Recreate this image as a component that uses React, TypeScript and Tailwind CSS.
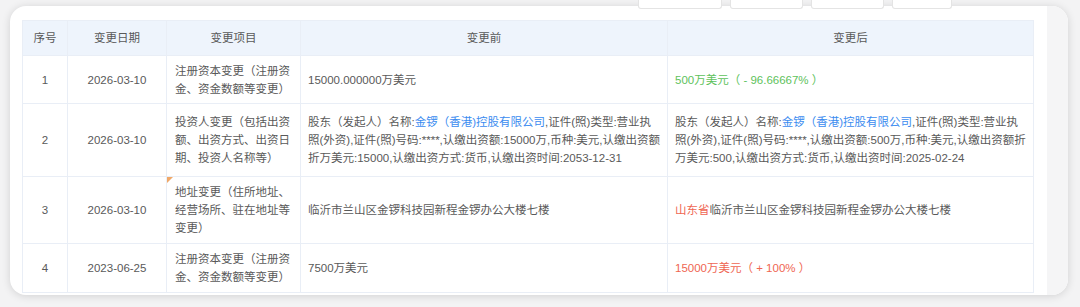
import React from "react";

const cell = "border border-[#e9eef6] align-middle";

type Row = {
  no: string;
  date: string;
  item: React.ReactNode;
  before: React.ReactNode;
  after: React.ReactNode;
  h: string;
  marker?: boolean;
};

const Blue = ({ children }: { children: React.ReactNode }) => (
  <span className="text-[#3b8cf0]">{children}</span>
);

const rows: Row[] = [
  {
    no: "1",
    date: "2026-03-10",
    item: (
      <>
        注册资本变更（注册资
        <br />
        金、资金数额等变更）
      </>
    ),
    before: "15000.000000万美元",
    after: <span className="text-[#5ec25c]">500万美元（ - 96.66667% ）</span>,
    h: "h-[48px]",
  },
  {
    no: "2",
    date: "2026-03-10",
    item: (
      <>
        投资人变更（包括出资
        <br />
        额、出资方式、出资日
        <br />
        期、投资人名称等）
      </>
    ),
    before: (
      <>
        股东（发起人）名称:<Blue>金锣（香港)控股有限公司</Blue>,证件(照)类型:营业执
        <br />
        照(外资),证件(照)号码:****,认缴出资额:15000万,币种:美元,认缴出资额
        <br />
        折万美元:15000,认缴出资方式:货币,认缴出资时间:2053-12-31
      </>
    ),
    after: (
      <>
        股东（发起人）名称:<Blue>金锣（香港)控股有限公司</Blue>,证件(照)类型:营业执
        <br />
        照(外资),证件(照)号码:****,认缴出资额:500万,币种:美元,认缴出资额折
        <br />
        万美元:500,认缴出资方式:货币,认缴出资时间:2025-02-24
      </>
    ),
    h: "h-[73px]",
  },
  {
    no: "3",
    date: "2026-03-10",
    item: (
      <>
        地址变更（住所地址、
        <br />
        经营场所、驻在地址等
        <br />
        变更）
      </>
    ),
    before: "临沂市兰山区金锣科技园新程金锣办公大楼七楼",
    after: (
      <>
        <span className="text-[#ef6652]">山东省</span>临沂市兰山区金锣科技园新程金锣办公大楼七楼
      </>
    ),
    h: "h-[67px]",
    marker: true,
  },
  {
    no: "4",
    date: "2023-06-25",
    item: (
      <>
        注册资本变更（注册资
        <br />
        金、资金数额等变更）
      </>
    ),
    before: "7500万美元",
    after: <span className="text-[#ef6652]">15000万美元（ + 100% ）</span>,
    h: "h-[49px]",
  },
];

export default function App() {
  return (
    <div
      className="relative w-[1080px] h-[307px] bg-[#f3f3f4] pt-[6px] pl-[10px] overflow-hidden text-[#595959] text-[11.5px]"
      style={{ fontFamily: '"Liberation Sans", "Noto Sans CJK SC", sans-serif' }}
    >
      <div className="relative w-[1058px] h-[289px] bg-white rounded-[16px] shadow-[0_1px_8px_rgba(0,0,0,0.14)] overflow-hidden flex">
        <div className="pl-[12px] pt-[14px]">
          <table className="border-collapse table-fixed w-[1011px] leading-[18px]">
            <colgroup>
              <col className="w-[45px]" />
              <col className="w-[99px]" />
              <col className="w-[134px]" />
              <col className="w-[367px]" />
              <col className="w-[366px]" />
            </colgroup>
            <thead>
              <tr className="h-[35px] bg-[#eef4fc]">
                <th className={`${cell} font-normal text-center`}>序号</th>
                <th className={`${cell} font-normal text-center`}>变更日期</th>
                <th className={`${cell} font-normal text-center`}>变更项目</th>
                <th className={`${cell} font-normal text-center`}>变更前</th>
                <th className={`${cell} font-normal text-center`}>变更后</th>
              </tr>
            </thead>
            <tbody>
              {rows.map((r) => (
                <tr key={r.no} className={r.h}>
                  <td className={`${cell} text-center`}>{r.no}</td>
                  <td className={`${cell} text-center`}>{r.date}</td>
                  <td className={`${cell} relative px-[8px] whitespace-nowrap`}>
                    {r.marker && (
                      <span className="absolute left-0 top-0 w-0 h-0 border-t-[6px] border-r-[6px] border-t-[#f0a868] border-r-transparent" />
                    )}
                    {r.item}
                  </td>
                  <td className={`${cell} px-[7px] whitespace-nowrap`}>{r.before}</td>
                  <td className={`${cell} px-[7px] whitespace-nowrap`}>{r.after}</td>
                </tr>
              ))}
            </tbody>
          </table>
        </div>
        <div className="ml-auto w-[21px] h-full bg-[#f5f5f6]" />
      </div>
      <div className="absolute top-0 left-[638px] flex gap-[8px]">
        <div className="w-[84px] h-[9px] bg-white border border-t-0 border-[#e4e4e4] rounded-b-[3px]" />
        <div className="w-[73px] h-[9px] bg-white border border-t-0 border-[#e4e4e4] rounded-b-[3px]" />
        <div className="w-[73px] h-[9px] bg-white border border-t-0 border-[#e4e4e4] rounded-b-[3px]" />
        <div className="w-[60px] h-[9px] bg-white border border-t-0 border-[#e4e4e4] rounded-b-[3px]" />
      </div>
    </div>
  );
}
